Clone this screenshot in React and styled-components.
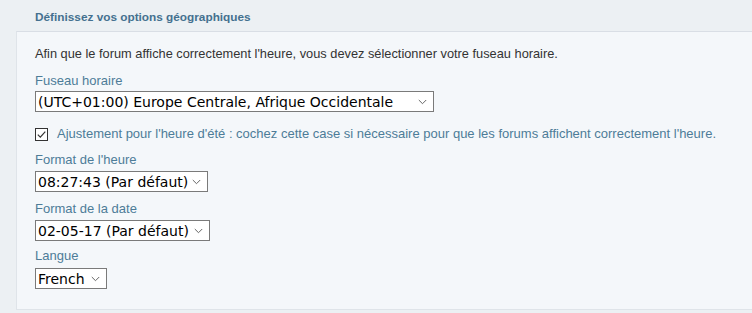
import React from "react";
import styled, { createGlobalStyle } from "styled-components";

const colors = {
  page: "#ecf0f3",
  panel: "#f4f7fa",
  title: "#44708f",
  label: "#4d7c98",
  text: "#333333",
};

const GlobalStyle = createGlobalStyle`
  body {
    margin: 0;
    background: ${colors.page};
    font-family: "Liberation Sans", Arial, sans-serif;
    font-size: 13px;
    color: ${colors.text};
  }
`;

const Page = styled.div`
  padding-left: 16px;
  overflow: hidden;
`;

const Title = styled.h2`
  margin: 0;
  height: 31px;
  box-sizing: border-box;
  padding: 9px 0 0 19px;
  font-size: 11.8px;
  line-height: 16px;
  font-weight: bold;
  color: ${colors.title};
`;

const Panel = styled.div`
  background: ${colors.panel};
  border-top: 1px solid #d9dee5;
  border-left: 1px solid #dfe4e9;
  border-bottom: 1px solid #dfe4e9;
  margin-right: -20px;
  padding: 14px 18px 20px;
  line-height: 16px;
`;

const Intro = styled.p`
  margin: 0 0 11px;
  font-size: 12.8px;
`;

const Field = styled.div`
  margin-bottom: ${(p) => p.$gap ?? 9}px;
`;

const Label = styled.div`
  color: ${colors.label};
  margin-bottom: ${(p) => p.$gap ?? 3}px;
`;

const SelectBox = styled.div`
  display: flex;
  align-items: center;
  box-sizing: border-box;
  width: ${(p) => p.$width}px;
  height: 21px;
  padding: 0 6px 0 2px;
  background: #fff;
  border: 1px solid #7a7a7a;
  font-family: "DejaVu Sans", Verdana, sans-serif;
  font-size: 14px;
  color: #000;

  span {
    flex: 1;
    white-space: nowrap;
    overflow: hidden;
  }

  svg {
    flex: none;
    width: 9px;
    height: 6px;
  }
`;

const CheckRow = styled.label`
  display: flex;
  align-items: center;
  gap: 9px;
  color: ${colors.label};
  margin: 14px 0 10px;

  svg {
    flex: none;
    width: 13px;
    height: 13px;
  }
`;

function Chevron() {
  return (
    <svg viewBox="0 0 9 6">
      <path d="M0.8 1 L4.5 4.7 L8.2 1" fill="none" stroke="#666" strokeWidth="1" />
    </svg>
  );
}

function Select({ width, value }) {
  return (
    <SelectBox $width={width}>
      <span>{value}</span>
      <Chevron />
    </SelectBox>
  );
}

function CheckBox() {
  return (
    <svg viewBox="0 0 13 13">
      <rect x="0.5" y="0.5" width="12" height="12" fill="#fff" stroke="#333" />
      <path d="M2.8 6.6 L5.3 9.1 L10.3 3.6" fill="none" stroke="#333" strokeWidth="1.2" />
    </svg>
  );
}

export default function App() {
  return (
    <Page>
      <GlobalStyle />
      <Title>Définissez vos options géographiques</Title>
      <Panel>
        <Intro>
          Afin que le forum affiche correctement l'heure, vous devez sélectionner votre fuseau horaire.
        </Intro>
        <Field $gap={0}>
          <Label $gap={2}>Fuseau horaire</Label>
          <Select width={399} value="(UTC+01:00) Europe Centrale, Afrique Occidentale" />
        </Field>
        <CheckRow>
          <CheckBox />
          Ajustement pour l'heure d'été : cochez cette case si nécessaire pour que les forums affichent correctement l'heure.
        </CheckRow>
        <Field>
          <Label>Format de l'heure</Label>
          <Select width={173} value="08:27:43 (Par défaut)" />
        </Field>
        <Field $gap={7}>
          <Label>Format de la date</Label>
          <Select width={175} value="02-05-17 (Par défaut)" />
        </Field>
        <Field $gap={0}>
          <Label $gap={4}>Langue</Label>
          <Select width={72} value="French" />
        </Field>
      </Panel>
    </Page>
  );
}
